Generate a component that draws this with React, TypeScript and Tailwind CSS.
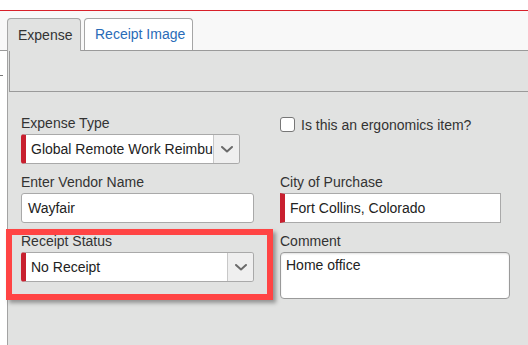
import React from 'react';

function Chevron() {
  return (
    <svg width="12" height="7" viewBox="0 0 12 7" fill="none">
      <path d="M1 1l5 4.5L11 1" stroke="#6b6b6b" strokeWidth="2" strokeLinecap="round" strokeLinejoin="round" />
    </svg>
  );
}

function Label({ children }: { children: React.ReactNode }) {
  return <div className="text-[14px] leading-[16px] text-[#333] mb-[3px] whitespace-nowrap">{children}</div>;
}

function SelectBox({ value, width }: { value: string; width: string }) {
  return (
    <div
      className={`${width} h-[30px] flex items-stretch bg-white border border-[#a9a9a9] border-l-[5px] border-l-[#c8202f] rounded-[3px] overflow-hidden`}
    >
      <div className="flex-1 min-w-0 pl-[5px] flex items-center text-[14px] text-[#222] whitespace-nowrap">
        {value}
      </div>
      <div className="w-[26px] shrink-0 bg-[#efefef] border-l border-[#c8c8c8] flex items-center justify-center">
        <Chevron />
      </div>
    </div>
  );
}

export default function App() {
  return (
    <div className="relative w-[528px] h-[345px] overflow-hidden bg-white font-['Liberation_Sans',Arial,sans-serif]">
      {/* top bar */}
      <div className="h-[10px] bg-white" />
      <div className="h-px bg-[#d8202a]" />

      {/* tabs */}
      <div className="bg-[#f8f8f8] pt-[7px] pl-[7px] flex items-end gap-[3px] border-b border-[#9a9a9a]">
        <div className="h-[33px] -mb-px w-[74px] bg-[#e1e2e1] border border-b-0 border-[#a6a6a6] rounded-t-[4px] flex items-center pl-[10px] text-[14px] text-[#333]">
          Expense
        </div>
        <div className="h-[32px] w-[109px] bg-white border border-b-0 border-[#a6a6a6] rounded-t-[4px] flex items-center pl-[10px] text-[14px] text-[#2a6cb8]">
          Receipt Image
        </div>
      </div>

      {/* content */}
      <div className="ml-[7px] h-[300px] border-l border-[#a3a3a3] bg-[#e1e2e1]">
        <div className="ml-px h-[41px] border-l border-b border-[#9a9a9a]" />

        <div className="pl-[13px] pt-[23px] grid grid-cols-[233px_230px] gap-x-[26px] gap-y-[10px]">
          <div>
            <Label>Expense Type</Label>
            <SelectBox value="Global Remote Work Reimbu" width="w-[219px]" />
          </div>
          <div className="pt-[2px] flex items-start gap-[6px]">
            <div className="w-[15px] h-[15px] bg-white border border-[#777] rounded-[3px]" />
            <span className="text-[14px] leading-[16px] text-[#333]">Is this an ergonomics item?</span>
          </div>

          <div>
            <Label>Enter Vendor Name</Label>
            <div className="w-[233px] h-[30px] bg-white border border-[#a9a9a9] rounded-[3px] pl-[6px] flex items-center text-[14px] text-[#222]">
              Wayfair
            </div>
          </div>
          <div>
            <Label>City of Purchase</Label>
            <div className="w-[221px] h-[30px] bg-white border border-[#a9a9a9] border-l-[5px] border-l-[#c8202f] pl-[5px] flex items-center text-[14px] text-[#222]">
              Fort Collins, Colorado
            </div>
          </div>

          <div>
            <Label>Receipt Status</Label>
            <SelectBox value="No Receipt" width="w-[233px]" />
          </div>
          <div>
            <Label>Comment</Label>
            <div className="w-[230px] h-[47px] bg-white border border-[#9a9a9a] rounded-[4px] shadow-[inset_0_1px_2px_rgba(0,0,0,0.12)] px-[5px] pt-[4px] text-[14px] leading-[16px] text-[#222]">
              Home office
            </div>
          </div>
        </div>
      </div>

      {/* small mark at left edge */}
      <div className="absolute left-0 top-[75px] w-[3px] h-px bg-[#777]" />

      {/* annotation box */}
      <div className="absolute left-[6px] top-[229px] w-[267px] h-[71px] border-[6px] border-[#ff4444] shadow-[3px_3px_4px_rgba(0,0,0,0.35)]" />
    </div>
  );
}
